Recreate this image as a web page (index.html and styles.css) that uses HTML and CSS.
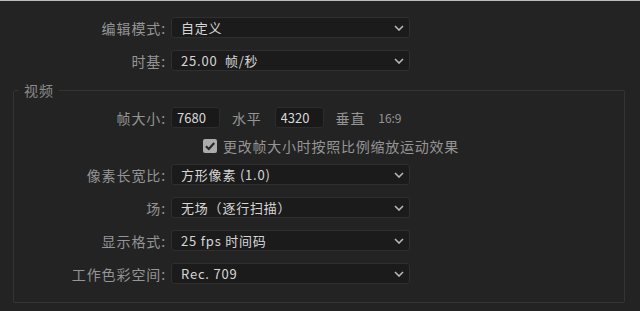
FILE: index.html
```html
<html>
<head>
<title>序列设置</title>
<link rel="stylesheet" href="styles.css">
</head>
<body>
<div class="panel">

  <div class="row">
    <span class="label">编辑模式:</span>
    <div class="select"><span>自定义</span><svg class="chev" viewBox="0 0 10 6"><path d="M1 1 L5 5 L9 1"/></svg></div>
  </div>

  <div class="row">
    <span class="label">时基:</span>
    <div class="select"><span>25.00&nbsp; 帧/秒</span><svg class="chev" viewBox="0 0 10 6"><path d="M1 1 L5 5 L9 1"/></svg></div>
  </div>

  <fieldset class="group">
    <legend>视频</legend>

    <div class="row frame">
      <span class="label">帧大小:</span>
      <input type="text" class="num" value="7680" />
      <span class="unit">水平</span>
      <input type="text" class="num" value="4320" />
      <span class="unit">垂直</span>
      <span class="ratio">16:9</span>
    </div>

    <label class="check">
      <span class="box"><svg viewBox="0 0 12 12"><path d="M2.5 6.2 L5 8.6 L9.6 3.4"/></svg></span>
      更改帧大小时按照比例缩放运动效果
    </label>

    <div class="row">
      <span class="label">像素长宽比:</span>
      <div class="select"><span>方形像素 (1.0)</span><svg class="chev" viewBox="0 0 10 6"><path d="M1 1 L5 5 L9 1"/></svg></div>
    </div>

    <div class="row">
      <span class="label">场:</span>
      <div class="select"><span>无场（逐行扫描）</span><svg class="chev" viewBox="0 0 10 6"><path d="M1 1 L5 5 L9 1"/></svg></div>
    </div>

    <div class="row">
      <span class="label">显示格式:</span>
      <div class="select"><span>25 fps 时间码</span><svg class="chev" viewBox="0 0 10 6"><path d="M1 1 L5 5 L9 1"/></svg></div>
    </div>

    <div class="row">
      <span class="label">工作色彩空间:</span>
      <div class="select"><span>Rec. 709</span><svg class="chev" viewBox="0 0 10 6"><path d="M1 1 L5 5 L9 1"/></svg></div>
    </div>
  </fieldset>

</div>
</body>
</html>
```

FILE: styles.css
```css
html, body {
  margin: 0;
  padding: 0;
  height: 100%;
}

body {
  background-color: #232323;
  border-top: 1px solid #bdbdbd;
  box-sizing: border-box;
  font-family: "Noto Sans CJK SC", "Noto Sans", sans-serif;
  font-size: 14px;
  color: #959595;
}

.panel {
  display: flex;
  flex-direction: column;
  gap: 12px;
  padding-top: 16px;
}

.row {
  display: flex;
  align-items: center;
  height: 21px;
}

.label {
  width: 166px;
  padding-right: 5px;
  text-align: right;
  letter-spacing: 0.9px;
  white-space: nowrap;
}

.group .label {
  width: 152px;
}

.select {
  width: 239px;
  height: 21px;
  box-sizing: border-box;
  display: flex;
  align-items: center;
  justify-content: space-between;
  padding: 0 5px 0 9px;
  background-color: #1b1b1b;
  border: 1px solid #2f2f2f;
  border-radius: 3px;
  color: #d6d6d6;
  font-size: 13px;
  letter-spacing: 0.8px;
}

.chev {
  width: 10px;
  height: 6px;
}

.chev path {
  fill: none;
  stroke: #b8b8b8;
  stroke-width: 1.6;
}

.group {
  margin: -3px 15px 0 13px;
  padding: 7px 0 18px;
  border: 1px solid #343434;
  border-radius: 2px;
  display: flex;
  flex-direction: column;
  gap: 12px;
}

.group legend {
  margin-left: 5px;
  padding: 0 5px;
  letter-spacing: 1px;
  font-size: 14px;
  color: #8c8c8c;
}

.num {
  width: 49px;
  height: 21px;
  box-sizing: border-box;
  padding: 0 0 0 5px;
  background-color: #191919;
  border: 1px solid #2c2c2c;
  border-radius: 3px;
  color: #d8d8d8;
  font-family: inherit;
  font-size: 13px;
}

.unit {
  margin: 0 12px 0 12px;
  letter-spacing: 0.8px;
}

.unit + .num {
  margin-left: 1px;
}

.ratio {
  font-size: 12px;
  margin-left: 1px;
}

.check {
  display: flex;
  align-items: center;
  margin: -2px 0 -2px 189px;
  height: 16px;
  letter-spacing: 0.75px;
  font-size: 14px;
}

.box {
  width: 14px;
  height: 14px;
  margin-right: 6px;
  border-radius: 2px;
  background-color: #ababab;
  display: flex;
}

.box svg {
  width: 14px;
  height: 14px;
}

.box path {
  fill: none;
  stroke: #262626;
  stroke-width: 1.8;
}
```
